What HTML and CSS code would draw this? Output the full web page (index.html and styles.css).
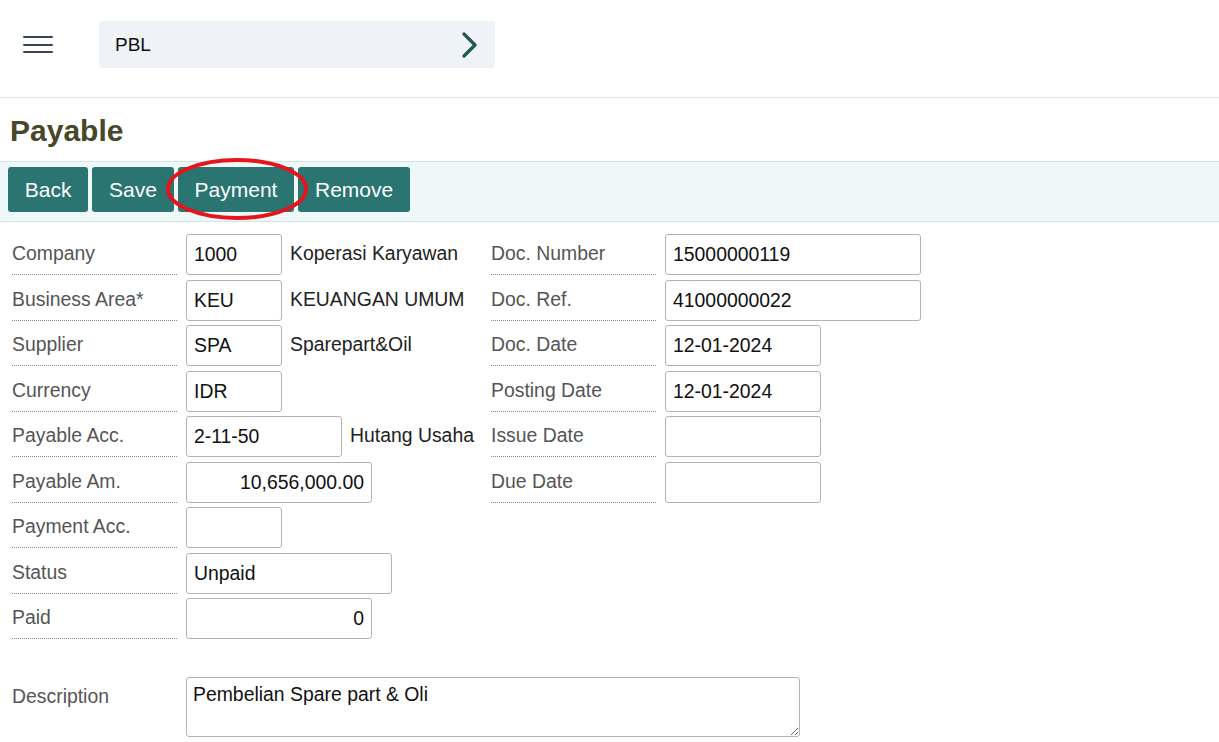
FILE: index.html
```html
<!DOCTYPE html>
<html lang="id">
<head>
<meta charset="utf-8">
<title>Payable</title>
<link rel="stylesheet" href="styles.css">
</head>
<body>
<header class="topbar">
  <div class="hamburger"><span></span><span></span><span></span></div>
  <div class="crumb">
    <span class="crumb-text">PBL</span>
    <svg class="chev" width="16" height="26" viewBox="0 0 16 26"><path d="M2 2 L13 13 L2 24" fill="none" stroke="#1f5956" stroke-width="3.2" stroke-linecap="round" stroke-linejoin="round"/></svg>
  </div>
</header>
<h1 class="title">Payable</h1>
<div class="toolbar">
  <button class="btn">Back</button>
  <button class="btn">Save</button>
  <button class="btn">Payment</button>
  <button class="btn">Remove</button>
  <svg class="mark" width="150" height="70" viewBox="0 0 150 70"><ellipse cx="73" cy="33" rx="69" ry="29" fill="none" stroke="#e5141d" stroke-width="4"/></svg>
</div>
<main class="form">
  <div class="cols">
    <div class="col col-left">
      <div class="row"><div class="lbl">Company</div><input class="inp w96" value="1000"><span class="desc">Koperasi Karyawan</span></div>
      <div class="row"><div class="lbl">Business Area*</div><input class="inp w96" value="KEU"><span class="desc">KEUANGAN UMUM</span></div>
      <div class="row"><div class="lbl">Supplier</div><input class="inp w96" value="SPA"><span class="desc">Sparepart&amp;Oil</span></div>
      <div class="row"><div class="lbl">Currency</div><input class="inp w96" value="IDR"></div>
      <div class="row"><div class="lbl">Payable Acc.</div><input class="inp w156" value="2-11-50"><span class="desc">Hutang Usaha</span></div>
      <div class="row"><div class="lbl">Payable Am.</div><input class="inp w186 num" value="10,656,000.00"></div>
      <div class="row"><div class="lbl">Payment Acc.</div><input class="inp w96" value=""></div>
      <div class="row"><div class="lbl">Status</div><input class="inp w206" value="Unpaid"></div>
      <div class="row"><div class="lbl">Paid</div><input class="inp w186 num" value="0"></div>
    </div>
    <div class="col col-right">
      <div class="row"><div class="lbl">Doc. Number</div><input class="inp w256" value="15000000119"></div>
      <div class="row"><div class="lbl">Doc. Ref.</div><input class="inp w256" value="41000000022"></div>
      <div class="row"><div class="lbl">Doc. Date</div><input class="inp w156" value="12-01-2024"></div>
      <div class="row"><div class="lbl">Posting Date</div><input class="inp w156" value="12-01-2024"></div>
      <div class="row"><div class="lbl">Issue Date</div><input class="inp w156" value=""></div>
      <div class="row"><div class="lbl">Due Date</div><input class="inp w156" value=""></div>
    </div>
  </div>
  <div class="row-desc">
    <div class="lbl-plain">Description</div>
    <textarea class="txt">Pembelian Spare part &amp; Oli</textarea>
  </div>
</main>
</body>
</html>
```
FILE: styles.css
```css
* { box-sizing: border-box; }
html, body { margin: 0; padding: 0; background: #fff; }
body {
  font-family: "Liberation Sans", Arial, sans-serif;
  color: #222;
  width: 1219px;
  height: 742px;
  overflow: hidden;
}
.topbar {
  height: 98px;
  border-bottom: 1px solid #dedede;
  display: flex;
  align-items: flex-start;
  padding: 21px 0 0 23px;
}
.hamburger {
  width: 30px;
  margin-top: 15px;
  display: flex;
  flex-direction: column;
  gap: 5.5px;
}
.hamburger span {
  display: block;
  height: 2px;
  background: #3b4454;
  border-radius: 1px;
}
.crumb {
  margin-left: 46px;
  width: 396px;
  height: 47px;
  background: #eff2f7;
  border-radius: 4px;
  display: flex;
  align-items: center;
  justify-content: space-between;
  padding: 0 17px 0 16px;
}
.crumb-text {
  font-size: 19px;
  color: #111;
}
.chev { display: block; margin-top: 1px; }
.title {
  margin: 0;
  height: 63px;
  padding: 16px 0 0 10px;
  font-size: 30px;
  line-height: 34px;
  font-weight: bold;
  color: #47472a;
}
.toolbar {
  position: relative;
  background: #eef8f8;
  border-top: 1px solid #d3e6e6;
  border-bottom: 1px solid #d3e6e6;
  padding: 5px 8px 9px;
  display: flex;
  gap: 4px;
}
.btn {
  height: 45px;
  padding: 0 16.8px;
  border: none;
  border-radius: 3px;
  background: #2a7471;
  color: #fff;
  font-family: "Liberation Sans", Arial, sans-serif;
  font-size: 21px;
  line-height: 45px;
}
.mark {
  position: absolute;
  left: 164px;
  top: -6px;
  pointer-events: none;
}
.form {
  padding: 8px 0 0 12px;
}
.cols {
  display: flex;
}
.col-left { width: 479px; }
.row {
  display: flex;
  align-items: flex-start;
  height: 45.5px;
}
.lbl {
  width: 165px;
  height: 45px;
  padding-top: 12px;
  line-height: 22px;
  font-size: 19.4px;
  color: #555;
  border-bottom: 1px dotted #8a8a8a;
  white-space: nowrap;
}
.inp {
  margin: 4px 0 0 9px;
  height: 41px;
  border: 1px solid #b3b3b3;
  border-radius: 3px;
  padding: 0 7px;
  font-family: "Liberation Sans", Arial, sans-serif;
  font-size: 19.4px;
  color: #111;
  background: #fff;
  outline: none;
}
.num { text-align: right; }
.w96 { width: 96px; }
.w156 { width: 156px; }
.w186 { width: 186px; }
.w206 { width: 206px; }
.w256 { width: 256px; }
.desc {
  margin-left: 8px;
  padding-top: 12px;
  line-height: 22px;
  font-size: 19.4px;
  color: #222;
  white-space: nowrap;
}
.row-desc {
  display: flex;
  align-items: flex-start;
  margin-top: 37px;
}
.lbl-plain {
  width: 165px;
  padding-top: 8px;
  line-height: 22px;
  font-size: 19.4px;
  color: #555;
}
.txt {
  margin-left: 9px;
  width: 614px;
  height: 60px;
  border: 1px solid #b3b3b3;
  border-radius: 3px;
  padding: 5px 6px;
  font-family: "Liberation Sans", Arial, sans-serif;
  font-size: 19.4px;
  line-height: 22px;
  color: #111;
  resize: both;
  outline: none;
}
```
